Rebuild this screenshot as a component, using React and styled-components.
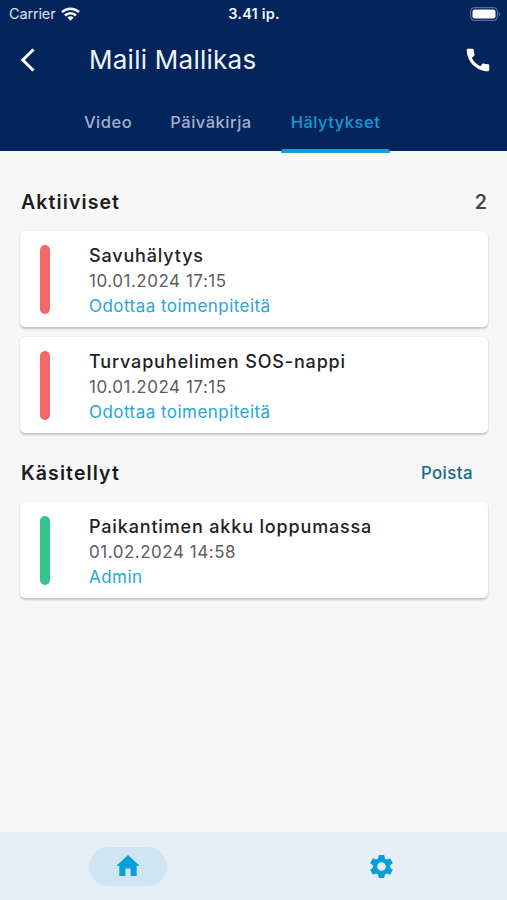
import React from "react";
import styled, { createGlobalStyle } from "styled-components";
import { MdCall, MdSettings } from "react-icons/md";

const GlobalStyle = createGlobalStyle`
  * { box-sizing: border-box; }
  body { margin: 0; font-family: Inter, "Liberation Sans", sans-serif; }
  button { font: inherit; border: 0; padding: 0; background: none; cursor: pointer; }
  h1, h2, h3, p { margin: 0; }
`;

const Screen = styled.div`
  width: 507px;
  height: 900px;
  display: flex;
  flex-direction: column;
  background: #f7f7f7;
  overflow: hidden;
`;

const Header = styled.header`
  height: 151px;
  flex: none;
  display: flex;
  flex-direction: column;
  background: #04245c;
  color: #fff;
`;

const StatusBar = styled.div`
  height: 27px;
  display: grid;
  grid-template-columns: 1fr auto 1fr;
  align-items: center;
  padding: 0 6px 0 9px;
`;

const Carrier = styled.div`
  display: flex;
  align-items: center;
  gap: 6px;
  font-size: 14.5px;
  letter-spacing: -0.15px;
  color: #dde3ee;
`;

const Clock = styled.div`
  font-size: 14.5px;
  font-weight: 600;
  letter-spacing: 0.2px;
  margin-right: 2px;
  color: #f0f3f8;
`;

const Battery = styled.svg`
  justify-self: end;
`;

const TitleBar = styled.div`
  height: 65px;
  display: flex;
  align-items: center;
  padding: 0 14px 0 20px;
`;

const IconButton = styled.button`
  display: flex;
  color: #fff;
`;

const Title = styled.h1`
  flex: 1;
  margin-left: 53px;
  padding-top: 1px;
  font-size: 26px;
  line-height: 32px;
  font-weight: 400;
  letter-spacing: 0.25px;
  color: #f0f3f9;
`;

const Tabs = styled.nav`
  height: 59px;
  flex: none;
  display: flex;
  gap: 20px;
  padding-left: 75px;
`;

const Tab = styled.button`
  position: relative;
  width: ${(p) => p.$width}px;
  height: 59px;
  padding-top: 1px;
  font-size: 16.5px;
  line-height: 20px;
  font-weight: 500;
  letter-spacing: 0.5px;
  color: ${(p) => (p.$active ? "#109cd3" : "#a3b1cd")};
`;

const Indicator = styled.span`
  position: absolute;
  left: 0;
  right: 0;
  bottom: -2px;
  height: 4px;
  border-radius: 3px 3px 1px 1px;
  background: #109fd8;
`;

const Content = styled.main`
  flex: 1;
  padding: 29px 19px 0 20px;
`;

const SectionHeader = styled.div`
  height: 44px;
  display: flex;
  justify-content: space-between;
  padding: ${(p) => p.$padding};
`;

const SectionTitle = styled.h2`
  font-size: 19.5px;
  line-height: 44px;
  font-weight: 600;
  letter-spacing: 1.1px;
  color: #1c1c1e;
`;

const Count = styled.span`
  font-size: 19.5px;
  line-height: 44px;
  font-weight: 600;
  color: #434547;
`;

const TextButton = styled.button`
  font-size: 16.8px;
  line-height: 44px;
  font-weight: 500;
  letter-spacing: 0.45px;
  color: #116a8c;
`;

const AlertList = styled.div`
  display: flex;
  flex-direction: column;
  gap: 10px;
  margin: ${(p) => p.$margin};
`;

const AlertCard = styled.article`
  height: 96px;
  display: flex;
  align-items: center;
  padding-left: 20px;
  border-radius: 5px;
  background: #fff;
  box-shadow: 0 1.5px 2px rgba(0, 0, 0, 0.2), 0 0 2px rgba(0, 0, 0, 0.05);
`;

const StatusStripe = styled.span`
  width: 10px;
  height: 69px;
  border-radius: 5px;
  background: ${(p) => (p.$handled ? "#36c38e" : "#f56769")};
`;

const AlertText = styled.div`
  margin-left: 39px;
  padding-top: 2px;
  white-space: nowrap;
`;

const AlertTitle = styled.h3`
  font-size: 18px;
  line-height: 26px;
  font-weight: 500;
  letter-spacing: 0.84px;
  color: #222224;
`;

const AlertTime = styled.p`
  font-size: 17px;
  line-height: 25px;
  letter-spacing: 0.52px;
  color: #5b5d60;
`;

const AlertStatus = styled.p`
  font-size: 17px;
  line-height: 24px;
  letter-spacing: 0.46px;
  color: #27a5d8;
`;

const BottomNav = styled.nav`
  height: 68px;
  flex: none;
  display: grid;
  grid-template-columns: 255px 1fr;
  place-items: center;
  background: #e6eff5;
  color: #08a0d8;
`;

const NavItem = styled.button`
  width: 78px;
  height: 39px;
  border-radius: 20px;
  display: flex;
  align-items: center;
  justify-content: center;
  color: inherit;
  background: ${(p) => (p.$active ? "#d0e5f2" : "transparent")};
`;

const tabs = [
  { label: "Video", width: 66 },
  { label: "Päiväkirja", width: 100 },
  { label: "Hälytykset", width: 109, active: true },
];

const activeAlerts = [
  { title: "Savuhälytys", time: "10.01.2024 17:15", status: "Odottaa toimenpiteitä" },
  { title: "Turvapuhelimen SOS-nappi", time: "10.01.2024 17:15", status: "Odottaa toimenpiteitä" },
];

const handledAlerts = [
  { title: "Paikantimen akku loppumassa", time: "01.02.2024 14:58", status: "Admin" },
];

function WifiIcon() {
  return (
    <svg width="19" height="14" viewBox="0 0 19 14" fill="none" stroke="#fff" strokeWidth="2.5">
      <path d="M1 5.1a12.2 12.2 0 0 1 17 0" />
      <path d="M4 8.5a7.9 7.9 0 0 1 11 0" />
      <path d="M9.5 13.8 6.4 10.6a4.5 4.5 0 0 1 6.2 0Z" fill="#fff" stroke="none" />
    </svg>
  );
}

function BatteryIcon() {
  return (
    <Battery width="31" height="14" viewBox="0 0 31 14">
      <rect x="0.6" y="0.6" width="26.8" height="12.8" rx="4" fill="none" stroke="#566b95" strokeWidth="1.2" />
      <rect x="2.5" y="2.5" width="23" height="9" rx="2.2" fill="#fff" />
      <path d="M28.8 4.7c1.6.5 1.6 4.1 0 4.6Z" fill="#566b95" />
    </Battery>
  );
}

function BackIcon() {
  return (
    <svg width="16" height="24" viewBox="0 0 16 24" fill="none" stroke="#fff" strokeWidth="3">
      <path d="M13.5 1.5 2.8 12l10.7 10.5" />
    </svg>
  );
}

function HomeIcon() {
  return (
    <svg width="24" height="22" viewBox="0 0 24 22" fill="currentColor">
      <path d="M12 0 .3 10.8h3V21h6.1v-7.4h5.2V21h6.1V10.8h3Z" />
    </svg>
  );
}

function Alert({ alert, handled }) {
  return (
    <AlertCard>
      <StatusStripe $handled={handled} />
      <AlertText>
        <AlertTitle>{alert.title}</AlertTitle>
        <AlertTime>{alert.time}</AlertTime>
        <AlertStatus>{alert.status}</AlertStatus>
      </AlertText>
    </AlertCard>
  );
}

export default function App() {
  return (
    <Screen>
      <GlobalStyle />
      <Header>
        <StatusBar>
          <Carrier>
            Carrier
            <WifiIcon />
          </Carrier>
          <Clock>3.41 ip.</Clock>
          <BatteryIcon />
        </StatusBar>
        <TitleBar>
          <IconButton aria-label="Takaisin">
            <BackIcon />
          </IconButton>
          <Title>Maili Mallikas</Title>
          <IconButton aria-label="Soita">
            <MdCall size={30} />
          </IconButton>
        </TitleBar>
        <Tabs>
          {tabs.map((tab) => (
            <Tab key={tab.label} $width={tab.width} $active={tab.active}>
              {tab.label}
              {tab.active && <Indicator />}
            </Tab>
          ))}
        </Tabs>
      </Header>
      <Content>
        <SectionHeader $padding="0 1px">
          <SectionTitle>Aktiiviset</SectionTitle>
          <Count>2</Count>
        </SectionHeader>
        <AlertList $margin="7px 0 18px">
          {activeAlerts.map((alert) => (
            <Alert key={alert.title} alert={alert} />
          ))}
        </AlertList>
        <SectionHeader $padding="0 15px 0 1px">
          <SectionTitle>Käsitellyt</SectionTitle>
          <TextButton>Poista</TextButton>
        </SectionHeader>
        <AlertList $margin="7px 0 0">
          {handledAlerts.map((alert) => (
            <Alert key={alert.title} alert={alert} handled />
          ))}
        </AlertList>
      </Content>
      <BottomNav>
        <NavItem $active aria-label="Koti">
          <HomeIcon />
        </NavItem>
        <NavItem aria-label="Asetukset">
          <MdSettings size={29} />
        </NavItem>
      </BottomNav>
    </Screen>
  );
}
